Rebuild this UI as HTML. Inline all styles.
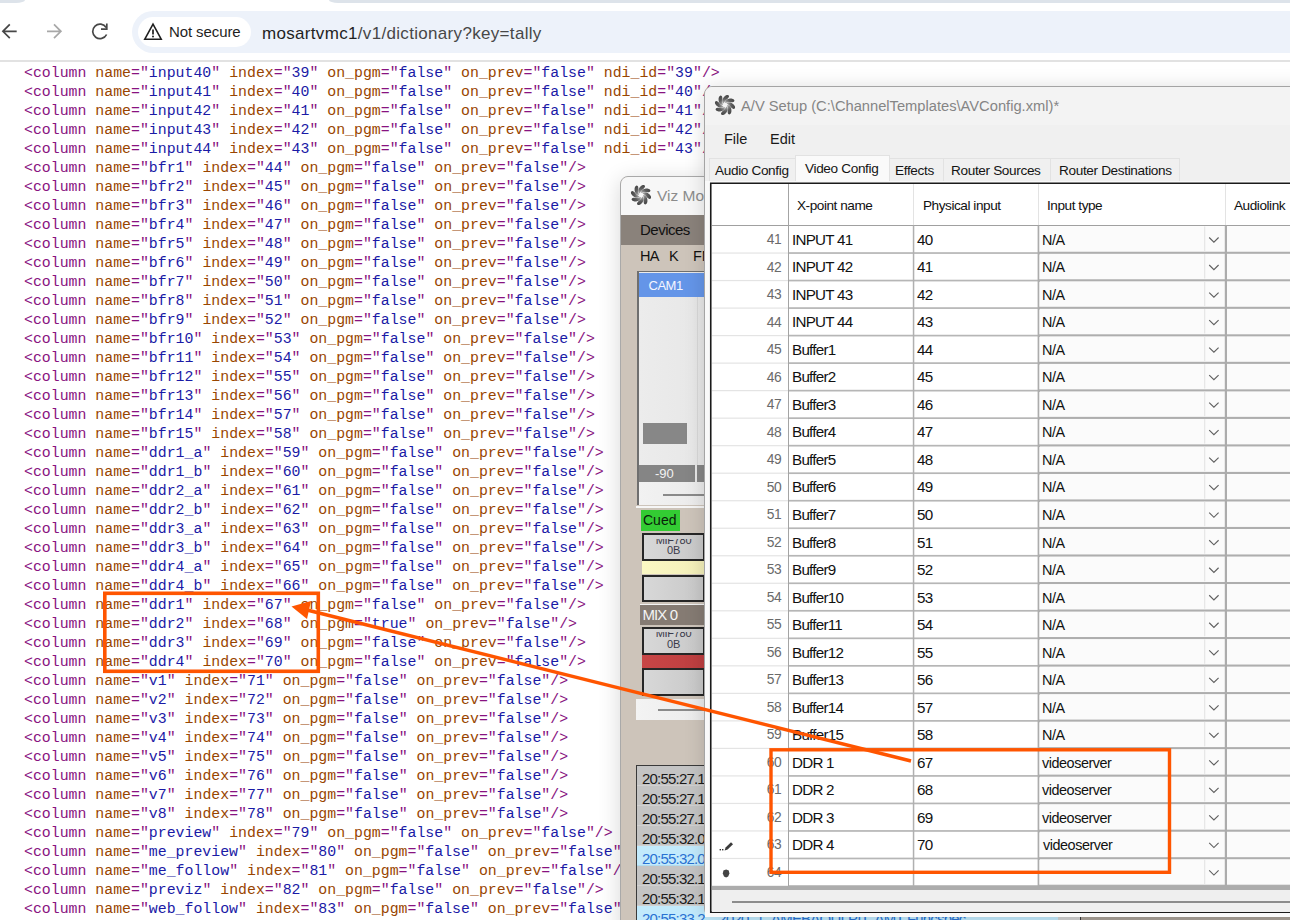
<!DOCTYPE html><html><head><meta charset="utf-8"><style>
*{margin:0;padding:0;box-sizing:border-box}
html,body{width:1290px;height:920px;overflow:hidden;background:#fff}
body{position:relative;font-family:"Liberation Sans",sans-serif}
.abs{position:absolute}
i{font-style:normal}
.xl{position:absolute;left:24px;height:19px;line-height:19px;white-space:pre;font-family:"Liberation Mono",monospace;font-size:14.86px}
.t{color:#881280}.a{color:#994500}.v{color:#1a1aa6}
</style></head><body>
<div class=abs style="left:0;top:0;width:25px;height:3px;background:#dde3ea;border-bottom-right-radius:9px 3px"></div>
<div class=abs style="left:329px;top:0;width:964px;height:3px;background:#dde3ea;border-bottom-left-radius:9px 3px"></div>
<div class=abs style="left:132px;top:11px;width:1200px;height:42px;background:#edf2fa;border-radius:21px"></div>
<div class=abs style="left:138px;top:17px;width:113px;height:30px;background:#fff;border-radius:15px"></div>
<div class=abs style="left:0;top:60px;width:1290px;height:2px;background:#e2e2e2"></div>
<svg class=abs style="left:0;top:16px" width="120" height="32" viewBox="0 16 120 32">
<g fill="none" stroke-width="1.7" stroke-linecap="butt">
<path d="M16.7 31.3H3.2M9.8 24.4L2.9 31.3L9.8 38.2" stroke="#474747"/>
<path d="M47 31.3H60.6M54 24.4L60.9 31.3L54 38.2" stroke="#a8a8a8"/>
<path d="M106.2 27.5A7.3 7.3 0 1 0 106.6 34.5" stroke="#474747"/>
<path d="M101 29.2H106.8V23.6" stroke="#474747"/>
</g></svg>
<svg class=abs style="left:143px;top:22px" width="20" height="20" viewBox="0 0 20 20">
<path d="M10 2.2L18.2 17.2H1.8Z" fill="none" stroke="#1f1f1f" stroke-width="1.6" stroke-linejoin="miter"/>
<path d="M10 7.4V12.4" stroke="#1f1f1f" stroke-width="1.7"/><circle cx="10" cy="14.4" r="1" fill="#1f1f1f"/>
</svg>
<div class=abs style="left:169px;top:20px;font-size:15px;line-height:24px;color:#1f1f1f;letter-spacing:-0.1px">Not secure</div>
<div class=abs style="left:262px;top:21px;font-size:17px;line-height:26px;color:#1f1f1f;letter-spacing:0.32px">mosartvmc1<span style="color:#474747">/v1/dictionary?key=tally</span></div>
<div class=xl style="top:64px"><i class=t>&lt;column</i> <i class=a>name</i><i class=t>="</i><i class=v>input40</i><i class=t>"</i> <i class=a>index</i><i class=t>="</i><i class=v>39</i><i class=t>"</i> <i class=a>on_pgm</i><i class=t>="</i><i class=v>false</i><i class=t>"</i> <i class=a>on_prev</i><i class=t>="</i><i class=v>false</i><i class=t>"</i> <i class=a>ndi_id</i><i class=t>="</i><i class=v>39</i><i class=t>"</i><i class=t>/&gt;</i></div>
<div class=xl style="top:83px"><i class=t>&lt;column</i> <i class=a>name</i><i class=t>="</i><i class=v>input41</i><i class=t>"</i> <i class=a>index</i><i class=t>="</i><i class=v>40</i><i class=t>"</i> <i class=a>on_pgm</i><i class=t>="</i><i class=v>false</i><i class=t>"</i> <i class=a>on_prev</i><i class=t>="</i><i class=v>false</i><i class=t>"</i> <i class=a>ndi_id</i><i class=t>="</i><i class=v>40</i><i class=t>"</i><i class=t>/&gt;</i></div>
<div class=xl style="top:102px"><i class=t>&lt;column</i> <i class=a>name</i><i class=t>="</i><i class=v>input42</i><i class=t>"</i> <i class=a>index</i><i class=t>="</i><i class=v>41</i><i class=t>"</i> <i class=a>on_pgm</i><i class=t>="</i><i class=v>false</i><i class=t>"</i> <i class=a>on_prev</i><i class=t>="</i><i class=v>false</i><i class=t>"</i> <i class=a>ndi_id</i><i class=t>="</i><i class=v>41</i><i class=t>"</i><i class=t>/&gt;</i></div>
<div class=xl style="top:121px"><i class=t>&lt;column</i> <i class=a>name</i><i class=t>="</i><i class=v>input43</i><i class=t>"</i> <i class=a>index</i><i class=t>="</i><i class=v>42</i><i class=t>"</i> <i class=a>on_pgm</i><i class=t>="</i><i class=v>false</i><i class=t>"</i> <i class=a>on_prev</i><i class=t>="</i><i class=v>false</i><i class=t>"</i> <i class=a>ndi_id</i><i class=t>="</i><i class=v>42</i><i class=t>"</i><i class=t>/&gt;</i></div>
<div class=xl style="top:140px"><i class=t>&lt;column</i> <i class=a>name</i><i class=t>="</i><i class=v>input44</i><i class=t>"</i> <i class=a>index</i><i class=t>="</i><i class=v>43</i><i class=t>"</i> <i class=a>on_pgm</i><i class=t>="</i><i class=v>false</i><i class=t>"</i> <i class=a>on_prev</i><i class=t>="</i><i class=v>false</i><i class=t>"</i> <i class=a>ndi_id</i><i class=t>="</i><i class=v>43</i><i class=t>"</i><i class=t>/&gt;</i></div>
<div class=xl style="top:159px"><i class=t>&lt;column</i> <i class=a>name</i><i class=t>="</i><i class=v>bfr1</i><i class=t>"</i> <i class=a>index</i><i class=t>="</i><i class=v>44</i><i class=t>"</i> <i class=a>on_pgm</i><i class=t>="</i><i class=v>false</i><i class=t>"</i> <i class=a>on_prev</i><i class=t>="</i><i class=v>false</i><i class=t>"</i><i class=t>/&gt;</i></div>
<div class=xl style="top:178px"><i class=t>&lt;column</i> <i class=a>name</i><i class=t>="</i><i class=v>bfr2</i><i class=t>"</i> <i class=a>index</i><i class=t>="</i><i class=v>45</i><i class=t>"</i> <i class=a>on_pgm</i><i class=t>="</i><i class=v>false</i><i class=t>"</i> <i class=a>on_prev</i><i class=t>="</i><i class=v>false</i><i class=t>"</i><i class=t>/&gt;</i></div>
<div class=xl style="top:197px"><i class=t>&lt;column</i> <i class=a>name</i><i class=t>="</i><i class=v>bfr3</i><i class=t>"</i> <i class=a>index</i><i class=t>="</i><i class=v>46</i><i class=t>"</i> <i class=a>on_pgm</i><i class=t>="</i><i class=v>false</i><i class=t>"</i> <i class=a>on_prev</i><i class=t>="</i><i class=v>false</i><i class=t>"</i><i class=t>/&gt;</i></div>
<div class=xl style="top:216px"><i class=t>&lt;column</i> <i class=a>name</i><i class=t>="</i><i class=v>bfr4</i><i class=t>"</i> <i class=a>index</i><i class=t>="</i><i class=v>47</i><i class=t>"</i> <i class=a>on_pgm</i><i class=t>="</i><i class=v>false</i><i class=t>"</i> <i class=a>on_prev</i><i class=t>="</i><i class=v>false</i><i class=t>"</i><i class=t>/&gt;</i></div>
<div class=xl style="top:235px"><i class=t>&lt;column</i> <i class=a>name</i><i class=t>="</i><i class=v>bfr5</i><i class=t>"</i> <i class=a>index</i><i class=t>="</i><i class=v>48</i><i class=t>"</i> <i class=a>on_pgm</i><i class=t>="</i><i class=v>false</i><i class=t>"</i> <i class=a>on_prev</i><i class=t>="</i><i class=v>false</i><i class=t>"</i><i class=t>/&gt;</i></div>
<div class=xl style="top:254px"><i class=t>&lt;column</i> <i class=a>name</i><i class=t>="</i><i class=v>bfr6</i><i class=t>"</i> <i class=a>index</i><i class=t>="</i><i class=v>49</i><i class=t>"</i> <i class=a>on_pgm</i><i class=t>="</i><i class=v>false</i><i class=t>"</i> <i class=a>on_prev</i><i class=t>="</i><i class=v>false</i><i class=t>"</i><i class=t>/&gt;</i></div>
<div class=xl style="top:273px"><i class=t>&lt;column</i> <i class=a>name</i><i class=t>="</i><i class=v>bfr7</i><i class=t>"</i> <i class=a>index</i><i class=t>="</i><i class=v>50</i><i class=t>"</i> <i class=a>on_pgm</i><i class=t>="</i><i class=v>false</i><i class=t>"</i> <i class=a>on_prev</i><i class=t>="</i><i class=v>false</i><i class=t>"</i><i class=t>/&gt;</i></div>
<div class=xl style="top:292px"><i class=t>&lt;column</i> <i class=a>name</i><i class=t>="</i><i class=v>bfr8</i><i class=t>"</i> <i class=a>index</i><i class=t>="</i><i class=v>51</i><i class=t>"</i> <i class=a>on_pgm</i><i class=t>="</i><i class=v>false</i><i class=t>"</i> <i class=a>on_prev</i><i class=t>="</i><i class=v>false</i><i class=t>"</i><i class=t>/&gt;</i></div>
<div class=xl style="top:311px"><i class=t>&lt;column</i> <i class=a>name</i><i class=t>="</i><i class=v>bfr9</i><i class=t>"</i> <i class=a>index</i><i class=t>="</i><i class=v>52</i><i class=t>"</i> <i class=a>on_pgm</i><i class=t>="</i><i class=v>false</i><i class=t>"</i> <i class=a>on_prev</i><i class=t>="</i><i class=v>false</i><i class=t>"</i><i class=t>/&gt;</i></div>
<div class=xl style="top:330px"><i class=t>&lt;column</i> <i class=a>name</i><i class=t>="</i><i class=v>bfr10</i><i class=t>"</i> <i class=a>index</i><i class=t>="</i><i class=v>53</i><i class=t>"</i> <i class=a>on_pgm</i><i class=t>="</i><i class=v>false</i><i class=t>"</i> <i class=a>on_prev</i><i class=t>="</i><i class=v>false</i><i class=t>"</i><i class=t>/&gt;</i></div>
<div class=xl style="top:349px"><i class=t>&lt;column</i> <i class=a>name</i><i class=t>="</i><i class=v>bfr11</i><i class=t>"</i> <i class=a>index</i><i class=t>="</i><i class=v>54</i><i class=t>"</i> <i class=a>on_pgm</i><i class=t>="</i><i class=v>false</i><i class=t>"</i> <i class=a>on_prev</i><i class=t>="</i><i class=v>false</i><i class=t>"</i><i class=t>/&gt;</i></div>
<div class=xl style="top:368px"><i class=t>&lt;column</i> <i class=a>name</i><i class=t>="</i><i class=v>bfr12</i><i class=t>"</i> <i class=a>index</i><i class=t>="</i><i class=v>55</i><i class=t>"</i> <i class=a>on_pgm</i><i class=t>="</i><i class=v>false</i><i class=t>"</i> <i class=a>on_prev</i><i class=t>="</i><i class=v>false</i><i class=t>"</i><i class=t>/&gt;</i></div>
<div class=xl style="top:387px"><i class=t>&lt;column</i> <i class=a>name</i><i class=t>="</i><i class=v>bfr13</i><i class=t>"</i> <i class=a>index</i><i class=t>="</i><i class=v>56</i><i class=t>"</i> <i class=a>on_pgm</i><i class=t>="</i><i class=v>false</i><i class=t>"</i> <i class=a>on_prev</i><i class=t>="</i><i class=v>false</i><i class=t>"</i><i class=t>/&gt;</i></div>
<div class=xl style="top:406px"><i class=t>&lt;column</i> <i class=a>name</i><i class=t>="</i><i class=v>bfr14</i><i class=t>"</i> <i class=a>index</i><i class=t>="</i><i class=v>57</i><i class=t>"</i> <i class=a>on_pgm</i><i class=t>="</i><i class=v>false</i><i class=t>"</i> <i class=a>on_prev</i><i class=t>="</i><i class=v>false</i><i class=t>"</i><i class=t>/&gt;</i></div>
<div class=xl style="top:425px"><i class=t>&lt;column</i> <i class=a>name</i><i class=t>="</i><i class=v>bfr15</i><i class=t>"</i> <i class=a>index</i><i class=t>="</i><i class=v>58</i><i class=t>"</i> <i class=a>on_pgm</i><i class=t>="</i><i class=v>false</i><i class=t>"</i> <i class=a>on_prev</i><i class=t>="</i><i class=v>false</i><i class=t>"</i><i class=t>/&gt;</i></div>
<div class=xl style="top:444px"><i class=t>&lt;column</i> <i class=a>name</i><i class=t>="</i><i class=v>ddr1_a</i><i class=t>"</i> <i class=a>index</i><i class=t>="</i><i class=v>59</i><i class=t>"</i> <i class=a>on_pgm</i><i class=t>="</i><i class=v>false</i><i class=t>"</i> <i class=a>on_prev</i><i class=t>="</i><i class=v>false</i><i class=t>"</i><i class=t>/&gt;</i></div>
<div class=xl style="top:463px"><i class=t>&lt;column</i> <i class=a>name</i><i class=t>="</i><i class=v>ddr1_b</i><i class=t>"</i> <i class=a>index</i><i class=t>="</i><i class=v>60</i><i class=t>"</i> <i class=a>on_pgm</i><i class=t>="</i><i class=v>false</i><i class=t>"</i> <i class=a>on_prev</i><i class=t>="</i><i class=v>false</i><i class=t>"</i><i class=t>/&gt;</i></div>
<div class=xl style="top:482px"><i class=t>&lt;column</i> <i class=a>name</i><i class=t>="</i><i class=v>ddr2_a</i><i class=t>"</i> <i class=a>index</i><i class=t>="</i><i class=v>61</i><i class=t>"</i> <i class=a>on_pgm</i><i class=t>="</i><i class=v>false</i><i class=t>"</i> <i class=a>on_prev</i><i class=t>="</i><i class=v>false</i><i class=t>"</i><i class=t>/&gt;</i></div>
<div class=xl style="top:501px"><i class=t>&lt;column</i> <i class=a>name</i><i class=t>="</i><i class=v>ddr2_b</i><i class=t>"</i> <i class=a>index</i><i class=t>="</i><i class=v>62</i><i class=t>"</i> <i class=a>on_pgm</i><i class=t>="</i><i class=v>false</i><i class=t>"</i> <i class=a>on_prev</i><i class=t>="</i><i class=v>false</i><i class=t>"</i><i class=t>/&gt;</i></div>
<div class=xl style="top:520px"><i class=t>&lt;column</i> <i class=a>name</i><i class=t>="</i><i class=v>ddr3_a</i><i class=t>"</i> <i class=a>index</i><i class=t>="</i><i class=v>63</i><i class=t>"</i> <i class=a>on_pgm</i><i class=t>="</i><i class=v>false</i><i class=t>"</i> <i class=a>on_prev</i><i class=t>="</i><i class=v>false</i><i class=t>"</i><i class=t>/&gt;</i></div>
<div class=xl style="top:539px"><i class=t>&lt;column</i> <i class=a>name</i><i class=t>="</i><i class=v>ddr3_b</i><i class=t>"</i> <i class=a>index</i><i class=t>="</i><i class=v>64</i><i class=t>"</i> <i class=a>on_pgm</i><i class=t>="</i><i class=v>false</i><i class=t>"</i> <i class=a>on_prev</i><i class=t>="</i><i class=v>false</i><i class=t>"</i><i class=t>/&gt;</i></div>
<div class=xl style="top:558px"><i class=t>&lt;column</i> <i class=a>name</i><i class=t>="</i><i class=v>ddr4_a</i><i class=t>"</i> <i class=a>index</i><i class=t>="</i><i class=v>65</i><i class=t>"</i> <i class=a>on_pgm</i><i class=t>="</i><i class=v>false</i><i class=t>"</i> <i class=a>on_prev</i><i class=t>="</i><i class=v>false</i><i class=t>"</i><i class=t>/&gt;</i></div>
<div class=xl style="top:577px"><i class=t>&lt;column</i> <i class=a>name</i><i class=t>="</i><i class=v>ddr4_b</i><i class=t>"</i> <i class=a>index</i><i class=t>="</i><i class=v>66</i><i class=t>"</i> <i class=a>on_pgm</i><i class=t>="</i><i class=v>false</i><i class=t>"</i> <i class=a>on_prev</i><i class=t>="</i><i class=v>false</i><i class=t>"</i><i class=t>/&gt;</i></div>
<div class=xl style="top:596px"><i class=t>&lt;column</i> <i class=a>name</i><i class=t>="</i><i class=v>ddr1</i><i class=t>"</i> <i class=a>index</i><i class=t>="</i><i class=v>67</i><i class=t>"</i> <i class=a>on_pgm</i><i class=t>="</i><i class=v>false</i><i class=t>"</i> <i class=a>on_prev</i><i class=t>="</i><i class=v>false</i><i class=t>"</i><i class=t>/&gt;</i></div>
<div class=xl style="top:615px"><i class=t>&lt;column</i> <i class=a>name</i><i class=t>="</i><i class=v>ddr2</i><i class=t>"</i> <i class=a>index</i><i class=t>="</i><i class=v>68</i><i class=t>"</i> <i class=a>on_pgm</i><i class=t>="</i><i class=v>true</i><i class=t>"</i> <i class=a>on_prev</i><i class=t>="</i><i class=v>false</i><i class=t>"</i><i class=t>/&gt;</i></div>
<div class=xl style="top:634px"><i class=t>&lt;column</i> <i class=a>name</i><i class=t>="</i><i class=v>ddr3</i><i class=t>"</i> <i class=a>index</i><i class=t>="</i><i class=v>69</i><i class=t>"</i> <i class=a>on_pgm</i><i class=t>="</i><i class=v>false</i><i class=t>"</i> <i class=a>on_prev</i><i class=t>="</i><i class=v>false</i><i class=t>"</i><i class=t>/&gt;</i></div>
<div class=xl style="top:653px"><i class=t>&lt;column</i> <i class=a>name</i><i class=t>="</i><i class=v>ddr4</i><i class=t>"</i> <i class=a>index</i><i class=t>="</i><i class=v>70</i><i class=t>"</i> <i class=a>on_pgm</i><i class=t>="</i><i class=v>false</i><i class=t>"</i> <i class=a>on_prev</i><i class=t>="</i><i class=v>false</i><i class=t>"</i><i class=t>/&gt;</i></div>
<div class=xl style="top:672px"><i class=t>&lt;column</i> <i class=a>name</i><i class=t>="</i><i class=v>v1</i><i class=t>"</i> <i class=a>index</i><i class=t>="</i><i class=v>71</i><i class=t>"</i> <i class=a>on_pgm</i><i class=t>="</i><i class=v>false</i><i class=t>"</i> <i class=a>on_prev</i><i class=t>="</i><i class=v>false</i><i class=t>"</i><i class=t>/&gt;</i></div>
<div class=xl style="top:691px"><i class=t>&lt;column</i> <i class=a>name</i><i class=t>="</i><i class=v>v2</i><i class=t>"</i> <i class=a>index</i><i class=t>="</i><i class=v>72</i><i class=t>"</i> <i class=a>on_pgm</i><i class=t>="</i><i class=v>false</i><i class=t>"</i> <i class=a>on_prev</i><i class=t>="</i><i class=v>false</i><i class=t>"</i><i class=t>/&gt;</i></div>
<div class=xl style="top:710px"><i class=t>&lt;column</i> <i class=a>name</i><i class=t>="</i><i class=v>v3</i><i class=t>"</i> <i class=a>index</i><i class=t>="</i><i class=v>73</i><i class=t>"</i> <i class=a>on_pgm</i><i class=t>="</i><i class=v>false</i><i class=t>"</i> <i class=a>on_prev</i><i class=t>="</i><i class=v>false</i><i class=t>"</i><i class=t>/&gt;</i></div>
<div class=xl style="top:729px"><i class=t>&lt;column</i> <i class=a>name</i><i class=t>="</i><i class=v>v4</i><i class=t>"</i> <i class=a>index</i><i class=t>="</i><i class=v>74</i><i class=t>"</i> <i class=a>on_pgm</i><i class=t>="</i><i class=v>false</i><i class=t>"</i> <i class=a>on_prev</i><i class=t>="</i><i class=v>false</i><i class=t>"</i><i class=t>/&gt;</i></div>
<div class=xl style="top:748px"><i class=t>&lt;column</i> <i class=a>name</i><i class=t>="</i><i class=v>v5</i><i class=t>"</i> <i class=a>index</i><i class=t>="</i><i class=v>75</i><i class=t>"</i> <i class=a>on_pgm</i><i class=t>="</i><i class=v>false</i><i class=t>"</i> <i class=a>on_prev</i><i class=t>="</i><i class=v>false</i><i class=t>"</i><i class=t>/&gt;</i></div>
<div class=xl style="top:767px"><i class=t>&lt;column</i> <i class=a>name</i><i class=t>="</i><i class=v>v6</i><i class=t>"</i> <i class=a>index</i><i class=t>="</i><i class=v>76</i><i class=t>"</i> <i class=a>on_pgm</i><i class=t>="</i><i class=v>false</i><i class=t>"</i> <i class=a>on_prev</i><i class=t>="</i><i class=v>false</i><i class=t>"</i><i class=t>/&gt;</i></div>
<div class=xl style="top:786px"><i class=t>&lt;column</i> <i class=a>name</i><i class=t>="</i><i class=v>v7</i><i class=t>"</i> <i class=a>index</i><i class=t>="</i><i class=v>77</i><i class=t>"</i> <i class=a>on_pgm</i><i class=t>="</i><i class=v>false</i><i class=t>"</i> <i class=a>on_prev</i><i class=t>="</i><i class=v>false</i><i class=t>"</i><i class=t>/&gt;</i></div>
<div class=xl style="top:805px"><i class=t>&lt;column</i> <i class=a>name</i><i class=t>="</i><i class=v>v8</i><i class=t>"</i> <i class=a>index</i><i class=t>="</i><i class=v>78</i><i class=t>"</i> <i class=a>on_pgm</i><i class=t>="</i><i class=v>false</i><i class=t>"</i> <i class=a>on_prev</i><i class=t>="</i><i class=v>false</i><i class=t>"</i><i class=t>/&gt;</i></div>
<div class=xl style="top:824px"><i class=t>&lt;column</i> <i class=a>name</i><i class=t>="</i><i class=v>preview</i><i class=t>"</i> <i class=a>index</i><i class=t>="</i><i class=v>79</i><i class=t>"</i> <i class=a>on_pgm</i><i class=t>="</i><i class=v>false</i><i class=t>"</i> <i class=a>on_prev</i><i class=t>="</i><i class=v>false</i><i class=t>"</i><i class=t>/&gt;</i></div>
<div class=xl style="top:843px"><i class=t>&lt;column</i> <i class=a>name</i><i class=t>="</i><i class=v>me_preview</i><i class=t>"</i> <i class=a>index</i><i class=t>="</i><i class=v>80</i><i class=t>"</i> <i class=a>on_pgm</i><i class=t>="</i><i class=v>false</i><i class=t>"</i> <i class=a>on_prev</i><i class=t>="</i><i class=v>false</i><i class=t>"</i><i class=t>/&gt;</i></div>
<div class=xl style="top:862px"><i class=t>&lt;column</i> <i class=a>name</i><i class=t>="</i><i class=v>me_follow</i><i class=t>"</i> <i class=a>index</i><i class=t>="</i><i class=v>81</i><i class=t>"</i> <i class=a>on_pgm</i><i class=t>="</i><i class=v>false</i><i class=t>"</i> <i class=a>on_prev</i><i class=t>="</i><i class=v>false</i><i class=t>"</i><i class=t>/&gt;</i></div>
<div class=xl style="top:881px"><i class=t>&lt;column</i> <i class=a>name</i><i class=t>="</i><i class=v>previz</i><i class=t>"</i> <i class=a>index</i><i class=t>="</i><i class=v>82</i><i class=t>"</i> <i class=a>on_pgm</i><i class=t>="</i><i class=v>false</i><i class=t>"</i> <i class=a>on_prev</i><i class=t>="</i><i class=v>false</i><i class=t>"</i><i class=t>/&gt;</i></div>
<div class=xl style="top:900px"><i class=t>&lt;column</i> <i class=a>name</i><i class=t>="</i><i class=v>web_follow</i><i class=t>"</i> <i class=a>index</i><i class=t>="</i><i class=v>83</i><i class=t>"</i> <i class=a>on_pgm</i><i class=t>="</i><i class=v>false</i><i class=t>"</i> <i class=a>on_prev</i><i class=t>="</i><i class=v>false</i><i class=t>"</i><i class=t>/&gt;</i></div>
<div class=abs style="left:620px;top:176px;width:700px;height:760px;background:#cdc4ba;border:1px solid #a9a9a9;border-radius:8px 0 0 0;box-shadow:0 4px 22px rgba(0,0,0,0.16);overflow:hidden">
<div class=abs style="left:0;top:0;width:700px;height:38px;background:#f7f7f7"></div>
<div class=abs style="left:0;top:38px;width:700px;height:30px;background:#8a827b"></div>
<div class=abs style="left:19px;top:44px;font-size:15px;line-height:18px;color:#111;letter-spacing:-0.5px">Devices</div>
<div class=abs style="left:19px;top:70px;font-size:14.5px;line-height:18px;color:#111;letter-spacing:-0.6px">HA</div>
<div class=abs style="left:48px;top:70px;font-size:14.5px;line-height:18px;color:#111">K</div>
<div class=abs style="left:72px;top:70px;font-size:14.5px;line-height:18px;color:#111">FM</div>
<div class=abs style="left:36px;top:10px;font-size:15.5px;line-height:18px;color:#8c8c8c">Viz Mosart</div>
<svg class=abs style="left:9px;top:7px" width="22" height="22" viewBox="-11 -11 22 22"><defs><radialGradient id="pwg2" cx="0" cy="0" r="10.5" gradientUnits="userSpaceOnUse"><stop offset="0.2" stop-color="#b0b0b0"/><stop offset="0.6" stop-color="#5e5e5e"/><stop offset="1" stop-color="#444"/></radialGradient></defs><path d="M-1.24,-1.55 L-0.93,-2.17 L-0.67,-2.68 L-0.39,-3.14 L-0.10,-3.55 L0.22,-3.95 L0.56,-4.33 L0.92,-4.71 L1.29,-5.08 L1.69,-5.46 L2.11,-5.84 L2.53,-6.25 L2.96,-6.70 L3.37,-7.22 L3.74,-7.83 L4.01,-8.58 L3.60,-9.75 L3.51,-9.80 L2.44,-10.08 L1.83,-10.02 L1.24,-9.82 L0.63,-9.50 L0.04,-9.09 L-0.53,-8.57 L-1.07,-7.98 L-1.56,-7.32 L-1.97,-6.60 L-2.29,-5.82 L-2.49,-5.02 L-2.57,-4.20 L-2.51,-3.40 L-2.30,-2.65 L-1.93,-2.00 L-1.33,-1.52Z" fill="url(#pwg2)"/><path d="M0.22,-1.97 L0.87,-2.19 L1.42,-2.37 L1.94,-2.50 L2.45,-2.58 L2.95,-2.64 L3.46,-2.67 L3.98,-2.68 L4.51,-2.68 L5.05,-2.66 L5.62,-2.64 L6.21,-2.63 L6.83,-2.65 L7.49,-2.72 L8.18,-2.89 L8.90,-3.24 L9.44,-4.35 L9.41,-4.44 L8.86,-5.40 L8.39,-5.79 L7.82,-6.07 L7.17,-6.27 L6.45,-6.40 L5.68,-6.44 L4.88,-6.40 L4.07,-6.28 L3.27,-6.06 L2.50,-5.73 L1.79,-5.31 L1.15,-4.79 L0.63,-4.18 L0.25,-3.50 L0.05,-2.77 L0.13,-2.01Z" fill="url(#pwg2)"/><path d="M1.55,-1.24 L2.17,-0.93 L2.68,-0.67 L3.14,-0.39 L3.55,-0.10 L3.95,0.22 L4.33,0.56 L4.71,0.92 L5.08,1.29 L5.46,1.69 L5.84,2.11 L6.25,2.53 L6.70,2.96 L7.22,3.37 L7.83,3.74 L8.58,4.01 L9.75,3.60 L9.80,3.51 L10.08,2.44 L10.02,1.83 L9.82,1.24 L9.50,0.63 L9.09,0.04 L8.57,-0.53 L7.98,-1.07 L7.32,-1.56 L6.60,-1.97 L5.82,-2.29 L5.02,-2.49 L4.20,-2.57 L3.40,-2.51 L2.65,-2.30 L2.00,-1.93 L1.52,-1.33Z" fill="url(#pwg2)"/><path d="M1.97,0.22 L2.19,0.87 L2.37,1.42 L2.50,1.94 L2.58,2.45 L2.64,2.95 L2.67,3.46 L2.68,3.98 L2.68,4.51 L2.66,5.05 L2.64,5.62 L2.63,6.21 L2.65,6.83 L2.72,7.49 L2.89,8.18 L3.24,8.90 L4.35,9.44 L4.44,9.41 L5.40,8.86 L5.79,8.39 L6.07,7.82 L6.27,7.17 L6.40,6.45 L6.44,5.68 L6.40,4.88 L6.28,4.07 L6.06,3.27 L5.73,2.50 L5.31,1.79 L4.79,1.15 L4.18,0.63 L3.50,0.25 L2.77,0.05 L2.01,0.13Z" fill="url(#pwg2)"/><path d="M1.24,1.55 L0.93,2.17 L0.67,2.68 L0.39,3.14 L0.10,3.55 L-0.22,3.95 L-0.56,4.33 L-0.92,4.71 L-1.29,5.08 L-1.69,5.46 L-2.11,5.84 L-2.53,6.25 L-2.96,6.70 L-3.37,7.22 L-3.74,7.83 L-4.01,8.58 L-3.60,9.75 L-3.51,9.80 L-2.44,10.08 L-1.83,10.02 L-1.24,9.82 L-0.63,9.50 L-0.04,9.09 L0.53,8.57 L1.07,7.98 L1.56,7.32 L1.97,6.60 L2.29,5.82 L2.49,5.02 L2.57,4.20 L2.51,3.40 L2.30,2.65 L1.93,2.00 L1.33,1.52Z" fill="url(#pwg2)"/><path d="M-0.22,1.97 L-0.87,2.19 L-1.42,2.37 L-1.94,2.50 L-2.45,2.58 L-2.95,2.64 L-3.46,2.67 L-3.98,2.68 L-4.51,2.68 L-5.05,2.66 L-5.62,2.64 L-6.21,2.63 L-6.83,2.65 L-7.49,2.72 L-8.18,2.89 L-8.90,3.24 L-9.44,4.35 L-9.41,4.44 L-8.86,5.40 L-8.39,5.79 L-7.82,6.07 L-7.17,6.27 L-6.45,6.40 L-5.68,6.44 L-4.88,6.40 L-4.07,6.28 L-3.27,6.06 L-2.50,5.73 L-1.79,5.31 L-1.15,4.79 L-0.63,4.18 L-0.25,3.50 L-0.05,2.77 L-0.13,2.01Z" fill="url(#pwg2)"/><path d="M-1.55,1.24 L-2.17,0.93 L-2.68,0.67 L-3.14,0.39 L-3.55,0.10 L-3.95,-0.22 L-4.33,-0.56 L-4.71,-0.92 L-5.08,-1.29 L-5.46,-1.69 L-5.84,-2.11 L-6.25,-2.53 L-6.70,-2.96 L-7.22,-3.37 L-7.83,-3.74 L-8.58,-4.01 L-9.75,-3.60 L-9.80,-3.51 L-10.08,-2.44 L-10.02,-1.83 L-9.82,-1.24 L-9.50,-0.63 L-9.09,-0.04 L-8.57,0.53 L-7.98,1.07 L-7.32,1.56 L-6.60,1.97 L-5.82,2.29 L-5.02,2.49 L-4.20,2.57 L-3.40,2.51 L-2.65,2.30 L-2.00,1.93 L-1.52,1.33Z" fill="url(#pwg2)"/><path d="M-1.97,-0.22 L-2.19,-0.87 L-2.37,-1.42 L-2.50,-1.94 L-2.58,-2.45 L-2.64,-2.95 L-2.67,-3.46 L-2.68,-3.98 L-2.68,-4.51 L-2.66,-5.05 L-2.64,-5.62 L-2.63,-6.21 L-2.65,-6.83 L-2.72,-7.49 L-2.89,-8.18 L-3.24,-8.90 L-4.35,-9.44 L-4.44,-9.41 L-5.40,-8.86 L-5.79,-8.39 L-6.07,-7.82 L-6.27,-7.17 L-6.40,-6.45 L-6.44,-5.68 L-6.40,-4.88 L-6.28,-4.07 L-6.06,-3.27 L-5.73,-2.50 L-5.31,-1.79 L-4.79,-1.15 L-4.18,-0.63 L-3.50,-0.25 L-2.77,-0.05 L-2.01,-0.13Z" fill="url(#pwg2)"/></svg>
</div>
<div class=abs style="left:637px;top:271px;width:80px;height:234px;background:linear-gradient(90deg,#ececec,#e6e6e6);border-left:2px solid #6f6f6f;border-top:1.5px solid #6f6f6f"></div>
<div class=abs style="left:639px;top:272.5px;width:80px;height:24.7px;background:#6495e8"></div>
<div class=abs style="left:648.5px;top:276.5px;font-size:13px;line-height:17px;color:#f4f6ff;letter-spacing:-0.5px">CAM1</div>
<div class=abs style="left:697px;top:297px;width:1px;height:168px;background:#d8d8d8"></div>
<div class=abs style="left:643px;top:423px;width:44px;height:21px;background:#878787"></div>
<div class=abs style="left:639px;top:465px;width:56px;height:17px;background:#858585"></div>
<div class=abs style="left:697px;top:465px;width:20px;height:17px;background:#858585"></div>
<div class=abs style="left:655px;top:465px;font-size:13px;line-height:17px;color:#f2f2f2">-90</div>
<div class=abs style="left:639px;top:482px;width:80px;height:23px;background:linear-gradient(90deg,#f2f2f2,#e9e9e9)"></div>
<div class=abs style="left:663px;top:494px;width:50px;height:2px;background:#8a8a8a"></div>
<div class=abs style="left:636px;top:506px;width:70px;height:2px;background:#f6f6f6"></div>
<div class=abs style="left:641px;top:510px;width:39px;height:21px;background:#33cc33"></div>
<div class=abs style="left:643px;top:512px;font-size:14px;line-height:17px;color:#0a200a">Cued</div>
<div class=abs style="left:642px;top:533px;width:63px;height:28px;background:linear-gradient(90deg,#d8d8d8,#c8c8c8);border:2px solid #262626"></div>
<div class=abs style="left:644px;top:538.5px;width:59px;height:18px;overflow:hidden"><div class=abs style="left:0;top:-4px;width:59px;font-size:11px;line-height:10.5px;color:#3a3a4a;white-space:pre;text-align:center;letter-spacing:-0.3px">MIF780
0B</div></div>
<div class=abs style="left:642px;top:561px;width:63px;height:13px;background:linear-gradient(90deg,#fbf8c4,#f2eeb8)"></div>
<div class=abs style="left:642px;top:574.5px;width:63px;height:27.5px;background:linear-gradient(90deg,#d8d8d8,#c8c8c8);border:2px solid #262626"></div>
<div class=abs style="left:640px;top:604px;width:70px;height:1px;background:#f4f4f4"></div>
<div class=abs style="left:640px;top:605px;width:70px;height:19.5px;background:#857b73"></div>
<div class=abs style="left:642.5px;top:606px;font-size:15px;line-height:17px;color:#f4f4f4;letter-spacing:-0.9px">MIX 0</div>
<div class=abs style="left:642px;top:626.5px;width:63px;height:28px;background:linear-gradient(90deg,#d8d8d8,#c8c8c8);border:2px solid #262626"></div>
<div class=abs style="left:644px;top:632px;width:59px;height:18px;overflow:hidden"><div class=abs style="left:0;top:-4px;width:59px;font-size:11px;line-height:10.5px;color:#3a3a4a;white-space:pre;text-align:center;letter-spacing:-0.3px">MIF780
0B</div></div>
<div class=abs style="left:642px;top:654.5px;width:63px;height:13.5px;background:linear-gradient(90deg,#c84646,#bd3e40)"></div>
<div class=abs style="left:642px;top:668px;width:63px;height:28px;background:linear-gradient(90deg,#d8d8d8,#c8c8c8);border:2px solid #262626"></div>
<div class=abs style="left:636px;top:699px;width:80px;height:21px;background:linear-gradient(90deg,#f3f3f3,#eaeaea)"></div>
<div class=abs style="left:658px;top:709px;width:55px;height:2px;background:#8a8a8a"></div>
<div class=abs style="left:1080px;top:900px;width:300px;height:40px;background:#a8a097"></div>
<div class=abs style="left:636px;top:765px;width:445px;height:170px;background:#c4c4c4;border:1px solid #3a3a3a;overflow:hidden">
<div class=abs style="left:0;top:0.0px;width:700px;height:20px;background:#c4c4c4;border-bottom:1px solid #d0d0d0"></div>
<div class=abs style="left:5px;top:2.5px;font-size:15px;line-height:20px;color:#1a1a1a;letter-spacing:-0.8px;white-space:pre">20:55:27.1    2020   |   AMEBAQULPIT  AMT Funcspec</div>
<div class=abs style="left:0;top:20.1px;width:700px;height:20px;background:#c4c4c4;border-bottom:1px solid #d0d0d0"></div>
<div class=abs style="left:5px;top:22.6px;font-size:15px;line-height:20px;color:#1a1a1a;letter-spacing:-0.8px;white-space:pre">20:55:27.1    2020   |   AMEBAQULPIT  AMT Funcspec</div>
<div class=abs style="left:0;top:40.1px;width:700px;height:20px;background:#c4c4c4;border-bottom:1px solid #d0d0d0"></div>
<div class=abs style="left:5px;top:42.6px;font-size:15px;line-height:20px;color:#1a1a1a;letter-spacing:-0.8px;white-space:pre">20:55:27.1    2020   |   AMEBAQULPIT  AMT Funcspec</div>
<div class=abs style="left:0;top:60.2px;width:700px;height:20px;background:#c4c4c4;border-bottom:1px solid #d0d0d0"></div>
<div class=abs style="left:5px;top:62.7px;font-size:15px;line-height:20px;color:#1a1a1a;letter-spacing:-0.8px;white-space:pre">20:55:32.0    2020   |   AMEBAQULPIT  AMT Funcspec</div>
<div class=abs style="left:0;top:80.2px;width:700px;height:20px;background:#c2eafc;border-bottom:1px solid #b0dbee"></div>
<div class=abs style="left:5px;top:82.7px;font-size:15px;line-height:20px;color:#2a72d2;letter-spacing:-0.8px;white-space:pre">20:55:32.0    2020   |   AMEBAQULPIT  AMT Funcspec</div>
<div class=abs style="left:0;top:100.3px;width:700px;height:20px;background:#c4c4c4;border-bottom:1px solid #d0d0d0"></div>
<div class=abs style="left:5px;top:102.8px;font-size:15px;line-height:20px;color:#1a1a1a;letter-spacing:-0.8px;white-space:pre">20:55:32.1    2020   |   AMEBAQULPIT  AMT Funcspec</div>
<div class=abs style="left:0;top:120.4px;width:700px;height:20px;background:#c4c4c4;border-bottom:1px solid #d0d0d0"></div>
<div class=abs style="left:5px;top:122.9px;font-size:15px;line-height:20px;color:#1a1a1a;letter-spacing:-0.8px;white-space:pre">20:55:32.1    2020   |   AMEBAQULPIT  AMT Funcspec</div>
<div class=abs style="left:0;top:140.4px;width:700px;height:20px;background:#c2eafc;border-bottom:1px solid #b0dbee"></div>
<div class=abs style="left:5px;top:142.9px;font-size:15px;line-height:20px;color:#2a72d2;letter-spacing:-0.8px;white-space:pre">20:55:33.2    2020   |   AMEBAQULPIT  AMT Funcspec</div>
<div class=abs style="left:421px;top:0;width:22px;height:170px;background:#d2d2d2"></div>
</div>
<div class=abs style="left:704px;top:86px;width:700px;height:831px;background:#f0f0f0;border:1px solid #a4a4a4;border-radius:8px 0 0 8px;box-shadow:0 2px 20px rgba(0,0,0,0.15);overflow:hidden"></div>
<div class=abs style="left:705px;top:87px;width:600px;height:38px;background:#f3f3f3;border-radius:7px 0 0 0"></div>
<svg class=abs style="left:714px;top:94px" width="22" height="22" viewBox="-11 -11 22 22"><defs><radialGradient id="pwg" cx="0" cy="0" r="10.5" gradientUnits="userSpaceOnUse"><stop offset="0.2" stop-color="#b0b0b0"/><stop offset="0.6" stop-color="#5e5e5e"/><stop offset="1" stop-color="#444"/></radialGradient></defs><path d="M-1.24,-1.55 L-0.93,-2.17 L-0.67,-2.68 L-0.39,-3.14 L-0.10,-3.55 L0.22,-3.95 L0.56,-4.33 L0.92,-4.71 L1.29,-5.08 L1.69,-5.46 L2.11,-5.84 L2.53,-6.25 L2.96,-6.70 L3.37,-7.22 L3.74,-7.83 L4.01,-8.58 L3.60,-9.75 L3.51,-9.80 L2.44,-10.08 L1.83,-10.02 L1.24,-9.82 L0.63,-9.50 L0.04,-9.09 L-0.53,-8.57 L-1.07,-7.98 L-1.56,-7.32 L-1.97,-6.60 L-2.29,-5.82 L-2.49,-5.02 L-2.57,-4.20 L-2.51,-3.40 L-2.30,-2.65 L-1.93,-2.00 L-1.33,-1.52Z" fill="url(#pwg)"/><path d="M0.22,-1.97 L0.87,-2.19 L1.42,-2.37 L1.94,-2.50 L2.45,-2.58 L2.95,-2.64 L3.46,-2.67 L3.98,-2.68 L4.51,-2.68 L5.05,-2.66 L5.62,-2.64 L6.21,-2.63 L6.83,-2.65 L7.49,-2.72 L8.18,-2.89 L8.90,-3.24 L9.44,-4.35 L9.41,-4.44 L8.86,-5.40 L8.39,-5.79 L7.82,-6.07 L7.17,-6.27 L6.45,-6.40 L5.68,-6.44 L4.88,-6.40 L4.07,-6.28 L3.27,-6.06 L2.50,-5.73 L1.79,-5.31 L1.15,-4.79 L0.63,-4.18 L0.25,-3.50 L0.05,-2.77 L0.13,-2.01Z" fill="url(#pwg)"/><path d="M1.55,-1.24 L2.17,-0.93 L2.68,-0.67 L3.14,-0.39 L3.55,-0.10 L3.95,0.22 L4.33,0.56 L4.71,0.92 L5.08,1.29 L5.46,1.69 L5.84,2.11 L6.25,2.53 L6.70,2.96 L7.22,3.37 L7.83,3.74 L8.58,4.01 L9.75,3.60 L9.80,3.51 L10.08,2.44 L10.02,1.83 L9.82,1.24 L9.50,0.63 L9.09,0.04 L8.57,-0.53 L7.98,-1.07 L7.32,-1.56 L6.60,-1.97 L5.82,-2.29 L5.02,-2.49 L4.20,-2.57 L3.40,-2.51 L2.65,-2.30 L2.00,-1.93 L1.52,-1.33Z" fill="url(#pwg)"/><path d="M1.97,0.22 L2.19,0.87 L2.37,1.42 L2.50,1.94 L2.58,2.45 L2.64,2.95 L2.67,3.46 L2.68,3.98 L2.68,4.51 L2.66,5.05 L2.64,5.62 L2.63,6.21 L2.65,6.83 L2.72,7.49 L2.89,8.18 L3.24,8.90 L4.35,9.44 L4.44,9.41 L5.40,8.86 L5.79,8.39 L6.07,7.82 L6.27,7.17 L6.40,6.45 L6.44,5.68 L6.40,4.88 L6.28,4.07 L6.06,3.27 L5.73,2.50 L5.31,1.79 L4.79,1.15 L4.18,0.63 L3.50,0.25 L2.77,0.05 L2.01,0.13Z" fill="url(#pwg)"/><path d="M1.24,1.55 L0.93,2.17 L0.67,2.68 L0.39,3.14 L0.10,3.55 L-0.22,3.95 L-0.56,4.33 L-0.92,4.71 L-1.29,5.08 L-1.69,5.46 L-2.11,5.84 L-2.53,6.25 L-2.96,6.70 L-3.37,7.22 L-3.74,7.83 L-4.01,8.58 L-3.60,9.75 L-3.51,9.80 L-2.44,10.08 L-1.83,10.02 L-1.24,9.82 L-0.63,9.50 L-0.04,9.09 L0.53,8.57 L1.07,7.98 L1.56,7.32 L1.97,6.60 L2.29,5.82 L2.49,5.02 L2.57,4.20 L2.51,3.40 L2.30,2.65 L1.93,2.00 L1.33,1.52Z" fill="url(#pwg)"/><path d="M-0.22,1.97 L-0.87,2.19 L-1.42,2.37 L-1.94,2.50 L-2.45,2.58 L-2.95,2.64 L-3.46,2.67 L-3.98,2.68 L-4.51,2.68 L-5.05,2.66 L-5.62,2.64 L-6.21,2.63 L-6.83,2.65 L-7.49,2.72 L-8.18,2.89 L-8.90,3.24 L-9.44,4.35 L-9.41,4.44 L-8.86,5.40 L-8.39,5.79 L-7.82,6.07 L-7.17,6.27 L-6.45,6.40 L-5.68,6.44 L-4.88,6.40 L-4.07,6.28 L-3.27,6.06 L-2.50,5.73 L-1.79,5.31 L-1.15,4.79 L-0.63,4.18 L-0.25,3.50 L-0.05,2.77 L-0.13,2.01Z" fill="url(#pwg)"/><path d="M-1.55,1.24 L-2.17,0.93 L-2.68,0.67 L-3.14,0.39 L-3.55,0.10 L-3.95,-0.22 L-4.33,-0.56 L-4.71,-0.92 L-5.08,-1.29 L-5.46,-1.69 L-5.84,-2.11 L-6.25,-2.53 L-6.70,-2.96 L-7.22,-3.37 L-7.83,-3.74 L-8.58,-4.01 L-9.75,-3.60 L-9.80,-3.51 L-10.08,-2.44 L-10.02,-1.83 L-9.82,-1.24 L-9.50,-0.63 L-9.09,-0.04 L-8.57,0.53 L-7.98,1.07 L-7.32,1.56 L-6.60,1.97 L-5.82,2.29 L-5.02,2.49 L-4.20,2.57 L-3.40,2.51 L-2.65,2.30 L-2.00,1.93 L-1.52,1.33Z" fill="url(#pwg)"/><path d="M-1.97,-0.22 L-2.19,-0.87 L-2.37,-1.42 L-2.50,-1.94 L-2.58,-2.45 L-2.64,-2.95 L-2.67,-3.46 L-2.68,-3.98 L-2.68,-4.51 L-2.66,-5.05 L-2.64,-5.62 L-2.63,-6.21 L-2.65,-6.83 L-2.72,-7.49 L-2.89,-8.18 L-3.24,-8.90 L-4.35,-9.44 L-4.44,-9.41 L-5.40,-8.86 L-5.79,-8.39 L-6.07,-7.82 L-6.27,-7.17 L-6.40,-6.45 L-6.44,-5.68 L-6.40,-4.88 L-6.28,-4.07 L-6.06,-3.27 L-5.73,-2.50 L-5.31,-1.79 L-4.79,-1.15 L-4.18,-0.63 L-3.50,-0.25 L-2.77,-0.05 L-2.01,-0.13Z" fill="url(#pwg)"/></svg>
<div class=abs style="left:741px;top:95.8px;font-size:14.7px;line-height:20px;color:#858585;white-space:pre">A/V Setup (C:\ChannelTemplates\AVConfig.xml)*</div>
<div class=abs style="left:724px;top:130px;font-size:14.5px;line-height:18px;color:#1a1a1a">File</div>
<div class=abs style="left:770px;top:130px;font-size:14.5px;line-height:18px;color:#1a1a1a">Edit</div>
<div class=abs style="left:709px;top:158px;width:87px;height:25px;background:#f0f0f0;border:1px solid #e2e2e2;border-bottom:none"></div><div class=abs style="left:715px;top:162px;font-size:13.6px;line-height:18px;color:#141414;white-space:pre;letter-spacing:-0.35px">Audio Config</div>
<div class=abs style="left:943px;top:158px;width:108px;height:25px;background:#f0f0f0;border:1px solid #e2e2e2;border-bottom:none"></div><div class=abs style="left:951px;top:162px;font-size:13.6px;line-height:18px;color:#141414;white-space:pre;letter-spacing:-0.35px">Router Sources</div>
<div class=abs style="left:1050px;top:158px;width:130px;height:25px;background:#f0f0f0;border:1px solid #e2e2e2;border-bottom:none"></div><div class=abs style="left:1059px;top:162px;font-size:13.6px;line-height:18px;color:#141414;white-space:pre;letter-spacing:-0.35px">Router Destinations</div>
<div class=abs style="left:889px;top:158px;width:55px;height:25px;background:#f0f0f0;border:1px solid #e2e2e2;border-bottom:none"></div><div class=abs style="left:895px;top:162px;font-size:13.6px;line-height:18px;color:#141414;white-space:pre;letter-spacing:-0.35px">Effects</div>
<div class=abs style="left:795px;top:155px;width:95px;height:28px;background:#fafafa;border:1px solid #e2e2e2;border-bottom:none"></div><div class=abs style="left:805px;top:160px;font-size:13.6px;line-height:18px;color:#141414;white-space:pre;letter-spacing:-0.35px">Video Config</div>
<div class=abs style="left:705px;top:180.5px;width:600px;height:736px;background:#f9f9f9"></div>
<div class=abs style="left:711px;top:184px;width:600px;height:728px;background:#fff"></div>
<svg class=abs style="left:0;top:0" width="1290" height="920" viewBox="0 0 1290 920"><path d="M1300 912.2H710.75V183.2H1300" fill="none" stroke="#1a1a1a" stroke-width="1.6"/></svg>
<div class=abs style="left:712px;top:225px;width:600px;height:1px;background:#a0a0a0"></div>
<div class=abs style="left:788px;top:184px;width:1px;height:41px;background:#e3e3e3"></div>
<div class=abs style="left:913px;top:184px;width:1px;height:41px;background:#e3e3e3"></div>
<div class=abs style="left:1038px;top:184px;width:1px;height:41px;background:#e3e3e3"></div>
<div class=abs style="left:1225px;top:184px;width:1px;height:41px;background:#e3e3e3"></div>
<div class=abs style="left:787.8px;top:184px;width:1.2px;height:702px;background:#a4a4a4"></div>
<div class=abs style="left:797px;top:197px;font-size:13.6px;line-height:18px;color:#111;white-space:pre;letter-spacing:-0.45px">X-point name</div>
<div class=abs style="left:923px;top:197px;font-size:13.6px;line-height:18px;color:#111;white-space:pre;letter-spacing:-0.45px">Physical input</div>
<div class=abs style="left:1047px;top:197px;font-size:13.6px;line-height:18px;color:#111;white-space:pre;letter-spacing:-0.45px">Input type</div>
<div class=abs style="left:1234px;top:197px;font-size:13.6px;line-height:18px;color:#111;white-space:pre;letter-spacing:-0.45px">Audiolink</div>
<svg class=abs style="left:0;top:0" width="1290" height="920" viewBox="0 0 1290 920">
<rect x="1040" y="226.30" width="185" height="25.92" fill="#fbfbfb"/>
<rect x="1227" y="226.30" width="70" height="25.92" fill="#fbfbfb"/>
<rect x="712" y="252.44" width="76" height="1.2" fill="#e4e4e4"/>
<rect x="789" y="252.19" width="250" height="1.7" fill="#b6b6b6"/>
<rect x="1039" y="251.74" width="260" height="2.6" fill="#aeaeae"/>
<rect x="1204.2" y="226.50" width="1" height="24.52" fill="#e2e2e2"/>
<path d="M1209.2 237.50L1213.9 242.10L1218.6 237.50" fill="none" stroke="#606060" stroke-width="1.15"/>
<rect x="1040" y="253.82" width="185" height="25.92" fill="#fbfbfb"/>
<rect x="1227" y="253.82" width="70" height="25.92" fill="#fbfbfb"/>
<rect x="712" y="279.96" width="76" height="1.2" fill="#e4e4e4"/>
<rect x="789" y="279.71" width="250" height="1.7" fill="#b6b6b6"/>
<rect x="1039" y="279.26" width="260" height="2.6" fill="#aeaeae"/>
<rect x="1204.2" y="254.02" width="1" height="24.52" fill="#e2e2e2"/>
<path d="M1209.2 265.02L1213.9 269.62L1218.6 265.02" fill="none" stroke="#606060" stroke-width="1.15"/>
<rect x="1040" y="281.34" width="185" height="25.92" fill="#fbfbfb"/>
<rect x="1227" y="281.34" width="70" height="25.92" fill="#fbfbfb"/>
<rect x="712" y="307.48" width="76" height="1.2" fill="#e4e4e4"/>
<rect x="789" y="307.23" width="250" height="1.7" fill="#b6b6b6"/>
<rect x="1039" y="306.78" width="260" height="2.6" fill="#aeaeae"/>
<rect x="1204.2" y="281.54" width="1" height="24.52" fill="#e2e2e2"/>
<path d="M1209.2 292.54L1213.9 297.14L1218.6 292.54" fill="none" stroke="#606060" stroke-width="1.15"/>
<rect x="1040" y="308.86" width="185" height="25.92" fill="#fbfbfb"/>
<rect x="1227" y="308.86" width="70" height="25.92" fill="#fbfbfb"/>
<rect x="712" y="335.00" width="76" height="1.2" fill="#e4e4e4"/>
<rect x="789" y="334.75" width="250" height="1.7" fill="#b6b6b6"/>
<rect x="1039" y="334.30" width="260" height="2.6" fill="#aeaeae"/>
<rect x="1204.2" y="309.06" width="1" height="24.52" fill="#e2e2e2"/>
<path d="M1209.2 320.06L1213.9 324.66L1218.6 320.06" fill="none" stroke="#606060" stroke-width="1.15"/>
<rect x="1040" y="336.38" width="185" height="25.92" fill="#fbfbfb"/>
<rect x="1227" y="336.38" width="70" height="25.92" fill="#fbfbfb"/>
<rect x="712" y="362.52" width="76" height="1.2" fill="#e4e4e4"/>
<rect x="789" y="362.27" width="250" height="1.7" fill="#b6b6b6"/>
<rect x="1039" y="361.82" width="260" height="2.6" fill="#aeaeae"/>
<rect x="1204.2" y="336.58" width="1" height="24.52" fill="#e2e2e2"/>
<path d="M1209.2 347.58L1213.9 352.18L1218.6 347.58" fill="none" stroke="#606060" stroke-width="1.15"/>
<rect x="1040" y="363.90" width="185" height="25.92" fill="#fbfbfb"/>
<rect x="1227" y="363.90" width="70" height="25.92" fill="#fbfbfb"/>
<rect x="712" y="390.04" width="76" height="1.2" fill="#e4e4e4"/>
<rect x="789" y="389.79" width="250" height="1.7" fill="#b6b6b6"/>
<rect x="1039" y="389.34" width="260" height="2.6" fill="#aeaeae"/>
<rect x="1204.2" y="364.10" width="1" height="24.52" fill="#e2e2e2"/>
<path d="M1209.2 375.10L1213.9 379.70L1218.6 375.10" fill="none" stroke="#606060" stroke-width="1.15"/>
<rect x="1040" y="391.42" width="185" height="25.92" fill="#fbfbfb"/>
<rect x="1227" y="391.42" width="70" height="25.92" fill="#fbfbfb"/>
<rect x="712" y="417.56" width="76" height="1.2" fill="#e4e4e4"/>
<rect x="789" y="417.31" width="250" height="1.7" fill="#b6b6b6"/>
<rect x="1039" y="416.86" width="260" height="2.6" fill="#aeaeae"/>
<rect x="1204.2" y="391.62" width="1" height="24.52" fill="#e2e2e2"/>
<path d="M1209.2 402.62L1213.9 407.22L1218.6 402.62" fill="none" stroke="#606060" stroke-width="1.15"/>
<rect x="1040" y="418.94" width="185" height="25.92" fill="#fbfbfb"/>
<rect x="1227" y="418.94" width="70" height="25.92" fill="#fbfbfb"/>
<rect x="712" y="445.08" width="76" height="1.2" fill="#e4e4e4"/>
<rect x="789" y="444.83" width="250" height="1.7" fill="#b6b6b6"/>
<rect x="1039" y="444.38" width="260" height="2.6" fill="#aeaeae"/>
<rect x="1204.2" y="419.14" width="1" height="24.52" fill="#e2e2e2"/>
<path d="M1209.2 430.14L1213.9 434.74L1218.6 430.14" fill="none" stroke="#606060" stroke-width="1.15"/>
<rect x="1040" y="446.46" width="185" height="25.92" fill="#fbfbfb"/>
<rect x="1227" y="446.46" width="70" height="25.92" fill="#fbfbfb"/>
<rect x="712" y="472.60" width="76" height="1.2" fill="#e4e4e4"/>
<rect x="789" y="472.35" width="250" height="1.7" fill="#b6b6b6"/>
<rect x="1039" y="471.90" width="260" height="2.6" fill="#aeaeae"/>
<rect x="1204.2" y="446.66" width="1" height="24.52" fill="#e2e2e2"/>
<path d="M1209.2 457.66L1213.9 462.26L1218.6 457.66" fill="none" stroke="#606060" stroke-width="1.15"/>
<rect x="1040" y="473.98" width="185" height="25.92" fill="#fbfbfb"/>
<rect x="1227" y="473.98" width="70" height="25.92" fill="#fbfbfb"/>
<rect x="712" y="500.12" width="76" height="1.2" fill="#e4e4e4"/>
<rect x="789" y="499.87" width="250" height="1.7" fill="#b6b6b6"/>
<rect x="1039" y="499.42" width="260" height="2.6" fill="#aeaeae"/>
<rect x="1204.2" y="474.18" width="1" height="24.52" fill="#e2e2e2"/>
<path d="M1209.2 485.18L1213.9 489.78L1218.6 485.18" fill="none" stroke="#606060" stroke-width="1.15"/>
<rect x="1040" y="501.50" width="185" height="25.92" fill="#fbfbfb"/>
<rect x="1227" y="501.50" width="70" height="25.92" fill="#fbfbfb"/>
<rect x="712" y="527.64" width="76" height="1.2" fill="#e4e4e4"/>
<rect x="789" y="527.39" width="250" height="1.7" fill="#b6b6b6"/>
<rect x="1039" y="526.94" width="260" height="2.6" fill="#aeaeae"/>
<rect x="1204.2" y="501.70" width="1" height="24.52" fill="#e2e2e2"/>
<path d="M1209.2 512.70L1213.9 517.30L1218.6 512.70" fill="none" stroke="#606060" stroke-width="1.15"/>
<rect x="1040" y="529.02" width="185" height="25.92" fill="#fbfbfb"/>
<rect x="1227" y="529.02" width="70" height="25.92" fill="#fbfbfb"/>
<rect x="712" y="555.16" width="76" height="1.2" fill="#e4e4e4"/>
<rect x="789" y="554.91" width="250" height="1.7" fill="#b6b6b6"/>
<rect x="1039" y="554.46" width="260" height="2.6" fill="#aeaeae"/>
<rect x="1204.2" y="529.22" width="1" height="24.52" fill="#e2e2e2"/>
<path d="M1209.2 540.22L1213.9 544.82L1218.6 540.22" fill="none" stroke="#606060" stroke-width="1.15"/>
<rect x="1040" y="556.54" width="185" height="25.92" fill="#fbfbfb"/>
<rect x="1227" y="556.54" width="70" height="25.92" fill="#fbfbfb"/>
<rect x="712" y="582.68" width="76" height="1.2" fill="#e4e4e4"/>
<rect x="789" y="582.43" width="250" height="1.7" fill="#b6b6b6"/>
<rect x="1039" y="581.98" width="260" height="2.6" fill="#aeaeae"/>
<rect x="1204.2" y="556.74" width="1" height="24.52" fill="#e2e2e2"/>
<path d="M1209.2 567.74L1213.9 572.34L1218.6 567.74" fill="none" stroke="#606060" stroke-width="1.15"/>
<rect x="1040" y="584.06" width="185" height="25.92" fill="#fbfbfb"/>
<rect x="1227" y="584.06" width="70" height="25.92" fill="#fbfbfb"/>
<rect x="712" y="610.20" width="76" height="1.2" fill="#e4e4e4"/>
<rect x="789" y="609.95" width="250" height="1.7" fill="#b6b6b6"/>
<rect x="1039" y="609.50" width="260" height="2.6" fill="#aeaeae"/>
<rect x="1204.2" y="584.26" width="1" height="24.52" fill="#e2e2e2"/>
<path d="M1209.2 595.26L1213.9 599.86L1218.6 595.26" fill="none" stroke="#606060" stroke-width="1.15"/>
<rect x="1040" y="611.58" width="185" height="25.92" fill="#fbfbfb"/>
<rect x="1227" y="611.58" width="70" height="25.92" fill="#fbfbfb"/>
<rect x="712" y="637.72" width="76" height="1.2" fill="#e4e4e4"/>
<rect x="789" y="637.47" width="250" height="1.7" fill="#b6b6b6"/>
<rect x="1039" y="637.02" width="260" height="2.6" fill="#aeaeae"/>
<rect x="1204.2" y="611.78" width="1" height="24.52" fill="#e2e2e2"/>
<path d="M1209.2 622.78L1213.9 627.38L1218.6 622.78" fill="none" stroke="#606060" stroke-width="1.15"/>
<rect x="1040" y="639.10" width="185" height="25.92" fill="#fbfbfb"/>
<rect x="1227" y="639.10" width="70" height="25.92" fill="#fbfbfb"/>
<rect x="712" y="665.24" width="76" height="1.2" fill="#e4e4e4"/>
<rect x="789" y="664.99" width="250" height="1.7" fill="#b6b6b6"/>
<rect x="1039" y="664.54" width="260" height="2.6" fill="#aeaeae"/>
<rect x="1204.2" y="639.30" width="1" height="24.52" fill="#e2e2e2"/>
<path d="M1209.2 650.30L1213.9 654.90L1218.6 650.30" fill="none" stroke="#606060" stroke-width="1.15"/>
<rect x="1040" y="666.62" width="185" height="25.92" fill="#fbfbfb"/>
<rect x="1227" y="666.62" width="70" height="25.92" fill="#fbfbfb"/>
<rect x="712" y="692.76" width="76" height="1.2" fill="#e4e4e4"/>
<rect x="789" y="692.51" width="250" height="1.7" fill="#b6b6b6"/>
<rect x="1039" y="692.06" width="260" height="2.6" fill="#aeaeae"/>
<rect x="1204.2" y="666.82" width="1" height="24.52" fill="#e2e2e2"/>
<path d="M1209.2 677.82L1213.9 682.42L1218.6 677.82" fill="none" stroke="#606060" stroke-width="1.15"/>
<rect x="1040" y="694.14" width="185" height="25.92" fill="#fbfbfb"/>
<rect x="1227" y="694.14" width="70" height="25.92" fill="#fbfbfb"/>
<rect x="712" y="720.28" width="76" height="1.2" fill="#e4e4e4"/>
<rect x="789" y="720.03" width="250" height="1.7" fill="#b6b6b6"/>
<rect x="1039" y="719.58" width="260" height="2.6" fill="#aeaeae"/>
<rect x="1204.2" y="694.34" width="1" height="24.52" fill="#e2e2e2"/>
<path d="M1209.2 705.34L1213.9 709.94L1218.6 705.34" fill="none" stroke="#606060" stroke-width="1.15"/>
<rect x="1040" y="721.66" width="185" height="25.92" fill="#fbfbfb"/>
<rect x="1227" y="721.66" width="70" height="25.92" fill="#fbfbfb"/>
<rect x="712" y="747.80" width="76" height="1.2" fill="#e4e4e4"/>
<rect x="789" y="747.55" width="250" height="1.7" fill="#b6b6b6"/>
<rect x="1039" y="747.10" width="260" height="2.6" fill="#aeaeae"/>
<rect x="1204.2" y="721.86" width="1" height="24.52" fill="#e2e2e2"/>
<path d="M1209.2 732.86L1213.9 737.46L1218.6 732.86" fill="none" stroke="#606060" stroke-width="1.15"/>
<rect x="1040" y="749.18" width="185" height="25.92" fill="#fbfbfb"/>
<rect x="1227" y="749.18" width="70" height="25.92" fill="#fbfbfb"/>
<rect x="712" y="775.32" width="76" height="1.2" fill="#e4e4e4"/>
<rect x="789" y="775.07" width="250" height="1.7" fill="#b6b6b6"/>
<rect x="1039" y="774.62" width="260" height="2.6" fill="#aeaeae"/>
<rect x="1204.2" y="749.38" width="1" height="24.52" fill="#e2e2e2"/>
<path d="M1209.2 760.38L1213.9 764.98L1218.6 760.38" fill="none" stroke="#606060" stroke-width="1.15"/>
<rect x="1040" y="776.70" width="185" height="25.92" fill="#fbfbfb"/>
<rect x="1227" y="776.70" width="70" height="25.92" fill="#fbfbfb"/>
<rect x="712" y="802.84" width="76" height="1.2" fill="#e4e4e4"/>
<rect x="789" y="802.59" width="250" height="1.7" fill="#b6b6b6"/>
<rect x="1039" y="802.14" width="260" height="2.6" fill="#aeaeae"/>
<rect x="1204.2" y="776.90" width="1" height="24.52" fill="#e2e2e2"/>
<path d="M1209.2 787.90L1213.9 792.50L1218.6 787.90" fill="none" stroke="#606060" stroke-width="1.15"/>
<rect x="1040" y="804.22" width="185" height="25.92" fill="#fbfbfb"/>
<rect x="1227" y="804.22" width="70" height="25.92" fill="#fbfbfb"/>
<rect x="712" y="830.36" width="76" height="1.2" fill="#e4e4e4"/>
<rect x="789" y="830.11" width="250" height="1.7" fill="#b6b6b6"/>
<rect x="1039" y="829.66" width="260" height="2.6" fill="#aeaeae"/>
<rect x="1204.2" y="804.42" width="1" height="24.52" fill="#e2e2e2"/>
<path d="M1209.2 815.42L1213.9 820.02L1218.6 815.42" fill="none" stroke="#606060" stroke-width="1.15"/>
<rect x="1040" y="831.74" width="185" height="25.92" fill="#fbfbfb"/>
<rect x="1227" y="831.74" width="70" height="25.92" fill="#fbfbfb"/>
<rect x="712" y="857.88" width="76" height="1.2" fill="#e4e4e4"/>
<rect x="789" y="857.63" width="250" height="1.7" fill="#b6b6b6"/>
<rect x="1039" y="857.18" width="260" height="2.6" fill="#aeaeae"/>
<path d="M1209.2 842.94L1213.9 847.54L1218.6 842.94" fill="none" stroke="#606060" stroke-width="1.15"/>
<rect x="1040" y="859.26" width="185" height="25.92" fill="#fbfbfb"/>
<rect x="1227" y="859.26" width="70" height="25.92" fill="#fbfbfb"/>
<rect x="712" y="885.40" width="76" height="1.2" fill="#e4e4e4"/>
<rect x="789" y="885.15" width="250" height="1.7" fill="#b6b6b6"/>
<rect x="1039" y="884.70" width="260" height="2.6" fill="#aeaeae"/>
<rect x="1204.2" y="859.46" width="1" height="24.52" fill="#e2e2e2"/>
<path d="M1209.2 870.46L1213.9 875.06L1218.6 870.46" fill="none" stroke="#606060" stroke-width="1.15"/>
<rect x="912.8" y="225.5" width="1.5" height="661" fill="#b0b0b0"/>
<rect x="1037.6" y="225.5" width="1.7" height="661" fill="#acacac"/>
<rect x="1224.8" y="225.5" width="2.2" height="661" fill="#acacac"/>
</svg>
<div class=abs style="left:738px;top:231.00px;width:43px;text-align:right;font-size:13.8px;line-height:18px;color:#6a6a6a;letter-spacing:-0.6px">41</div>
<div class=abs style="left:792px;top:230.80px;font-size:15.2px;line-height:18px;color:#111;white-space:pre;letter-spacing:-0.75px">INPUT 41</div>
<div class=abs style="left:917px;top:230.80px;font-size:15.2px;line-height:18px;color:#111;white-space:pre;letter-spacing:-0.6px">40</div>
<div class=abs style="left:1042px;top:230.80px;font-size:14.4px;line-height:18px;color:#111;white-space:pre;letter-spacing:-0.45px">N/A</div>
<div class=abs style="left:738px;top:258.52px;width:43px;text-align:right;font-size:13.8px;line-height:18px;color:#6a6a6a;letter-spacing:-0.6px">42</div>
<div class=abs style="left:792px;top:258.32px;font-size:15.2px;line-height:18px;color:#111;white-space:pre;letter-spacing:-0.75px">INPUT 42</div>
<div class=abs style="left:917px;top:258.32px;font-size:15.2px;line-height:18px;color:#111;white-space:pre;letter-spacing:-0.6px">41</div>
<div class=abs style="left:1042px;top:258.32px;font-size:14.4px;line-height:18px;color:#111;white-space:pre;letter-spacing:-0.45px">N/A</div>
<div class=abs style="left:738px;top:286.04px;width:43px;text-align:right;font-size:13.8px;line-height:18px;color:#6a6a6a;letter-spacing:-0.6px">43</div>
<div class=abs style="left:792px;top:285.84px;font-size:15.2px;line-height:18px;color:#111;white-space:pre;letter-spacing:-0.75px">INPUT 43</div>
<div class=abs style="left:917px;top:285.84px;font-size:15.2px;line-height:18px;color:#111;white-space:pre;letter-spacing:-0.6px">42</div>
<div class=abs style="left:1042px;top:285.84px;font-size:14.4px;line-height:18px;color:#111;white-space:pre;letter-spacing:-0.45px">N/A</div>
<div class=abs style="left:738px;top:313.56px;width:43px;text-align:right;font-size:13.8px;line-height:18px;color:#6a6a6a;letter-spacing:-0.6px">44</div>
<div class=abs style="left:792px;top:313.36px;font-size:15.2px;line-height:18px;color:#111;white-space:pre;letter-spacing:-0.75px">INPUT 44</div>
<div class=abs style="left:917px;top:313.36px;font-size:15.2px;line-height:18px;color:#111;white-space:pre;letter-spacing:-0.6px">43</div>
<div class=abs style="left:1042px;top:313.36px;font-size:14.4px;line-height:18px;color:#111;white-space:pre;letter-spacing:-0.45px">N/A</div>
<div class=abs style="left:738px;top:341.08px;width:43px;text-align:right;font-size:13.8px;line-height:18px;color:#6a6a6a;letter-spacing:-0.6px">45</div>
<div class=abs style="left:792px;top:340.88px;font-size:15.2px;line-height:18px;color:#111;white-space:pre;letter-spacing:-0.75px">Buffer1</div>
<div class=abs style="left:917px;top:340.88px;font-size:15.2px;line-height:18px;color:#111;white-space:pre;letter-spacing:-0.6px">44</div>
<div class=abs style="left:1042px;top:340.88px;font-size:14.4px;line-height:18px;color:#111;white-space:pre;letter-spacing:-0.45px">N/A</div>
<div class=abs style="left:738px;top:368.60px;width:43px;text-align:right;font-size:13.8px;line-height:18px;color:#6a6a6a;letter-spacing:-0.6px">46</div>
<div class=abs style="left:792px;top:368.40px;font-size:15.2px;line-height:18px;color:#111;white-space:pre;letter-spacing:-0.75px">Buffer2</div>
<div class=abs style="left:917px;top:368.40px;font-size:15.2px;line-height:18px;color:#111;white-space:pre;letter-spacing:-0.6px">45</div>
<div class=abs style="left:1042px;top:368.40px;font-size:14.4px;line-height:18px;color:#111;white-space:pre;letter-spacing:-0.45px">N/A</div>
<div class=abs style="left:738px;top:396.12px;width:43px;text-align:right;font-size:13.8px;line-height:18px;color:#6a6a6a;letter-spacing:-0.6px">47</div>
<div class=abs style="left:792px;top:395.92px;font-size:15.2px;line-height:18px;color:#111;white-space:pre;letter-spacing:-0.75px">Buffer3</div>
<div class=abs style="left:917px;top:395.92px;font-size:15.2px;line-height:18px;color:#111;white-space:pre;letter-spacing:-0.6px">46</div>
<div class=abs style="left:1042px;top:395.92px;font-size:14.4px;line-height:18px;color:#111;white-space:pre;letter-spacing:-0.45px">N/A</div>
<div class=abs style="left:738px;top:423.64px;width:43px;text-align:right;font-size:13.8px;line-height:18px;color:#6a6a6a;letter-spacing:-0.6px">48</div>
<div class=abs style="left:792px;top:423.44px;font-size:15.2px;line-height:18px;color:#111;white-space:pre;letter-spacing:-0.75px">Buffer4</div>
<div class=abs style="left:917px;top:423.44px;font-size:15.2px;line-height:18px;color:#111;white-space:pre;letter-spacing:-0.6px">47</div>
<div class=abs style="left:1042px;top:423.44px;font-size:14.4px;line-height:18px;color:#111;white-space:pre;letter-spacing:-0.45px">N/A</div>
<div class=abs style="left:738px;top:451.16px;width:43px;text-align:right;font-size:13.8px;line-height:18px;color:#6a6a6a;letter-spacing:-0.6px">49</div>
<div class=abs style="left:792px;top:450.96px;font-size:15.2px;line-height:18px;color:#111;white-space:pre;letter-spacing:-0.75px">Buffer5</div>
<div class=abs style="left:917px;top:450.96px;font-size:15.2px;line-height:18px;color:#111;white-space:pre;letter-spacing:-0.6px">48</div>
<div class=abs style="left:1042px;top:450.96px;font-size:14.4px;line-height:18px;color:#111;white-space:pre;letter-spacing:-0.45px">N/A</div>
<div class=abs style="left:738px;top:478.68px;width:43px;text-align:right;font-size:13.8px;line-height:18px;color:#6a6a6a;letter-spacing:-0.6px">50</div>
<div class=abs style="left:792px;top:478.48px;font-size:15.2px;line-height:18px;color:#111;white-space:pre;letter-spacing:-0.75px">Buffer6</div>
<div class=abs style="left:917px;top:478.48px;font-size:15.2px;line-height:18px;color:#111;white-space:pre;letter-spacing:-0.6px">49</div>
<div class=abs style="left:1042px;top:478.48px;font-size:14.4px;line-height:18px;color:#111;white-space:pre;letter-spacing:-0.45px">N/A</div>
<div class=abs style="left:738px;top:506.20px;width:43px;text-align:right;font-size:13.8px;line-height:18px;color:#6a6a6a;letter-spacing:-0.6px">51</div>
<div class=abs style="left:792px;top:506.00px;font-size:15.2px;line-height:18px;color:#111;white-space:pre;letter-spacing:-0.75px">Buffer7</div>
<div class=abs style="left:917px;top:506.00px;font-size:15.2px;line-height:18px;color:#111;white-space:pre;letter-spacing:-0.6px">50</div>
<div class=abs style="left:1042px;top:506.00px;font-size:14.4px;line-height:18px;color:#111;white-space:pre;letter-spacing:-0.45px">N/A</div>
<div class=abs style="left:738px;top:533.72px;width:43px;text-align:right;font-size:13.8px;line-height:18px;color:#6a6a6a;letter-spacing:-0.6px">52</div>
<div class=abs style="left:792px;top:533.52px;font-size:15.2px;line-height:18px;color:#111;white-space:pre;letter-spacing:-0.75px">Buffer8</div>
<div class=abs style="left:917px;top:533.52px;font-size:15.2px;line-height:18px;color:#111;white-space:pre;letter-spacing:-0.6px">51</div>
<div class=abs style="left:1042px;top:533.52px;font-size:14.4px;line-height:18px;color:#111;white-space:pre;letter-spacing:-0.45px">N/A</div>
<div class=abs style="left:738px;top:561.24px;width:43px;text-align:right;font-size:13.8px;line-height:18px;color:#6a6a6a;letter-spacing:-0.6px">53</div>
<div class=abs style="left:792px;top:561.04px;font-size:15.2px;line-height:18px;color:#111;white-space:pre;letter-spacing:-0.75px">Buffer9</div>
<div class=abs style="left:917px;top:561.04px;font-size:15.2px;line-height:18px;color:#111;white-space:pre;letter-spacing:-0.6px">52</div>
<div class=abs style="left:1042px;top:561.04px;font-size:14.4px;line-height:18px;color:#111;white-space:pre;letter-spacing:-0.45px">N/A</div>
<div class=abs style="left:738px;top:588.76px;width:43px;text-align:right;font-size:13.8px;line-height:18px;color:#6a6a6a;letter-spacing:-0.6px">54</div>
<div class=abs style="left:792px;top:588.56px;font-size:15.2px;line-height:18px;color:#111;white-space:pre;letter-spacing:-0.75px">Buffer10</div>
<div class=abs style="left:917px;top:588.56px;font-size:15.2px;line-height:18px;color:#111;white-space:pre;letter-spacing:-0.6px">53</div>
<div class=abs style="left:1042px;top:588.56px;font-size:14.4px;line-height:18px;color:#111;white-space:pre;letter-spacing:-0.45px">N/A</div>
<div class=abs style="left:738px;top:616.28px;width:43px;text-align:right;font-size:13.8px;line-height:18px;color:#6a6a6a;letter-spacing:-0.6px">55</div>
<div class=abs style="left:792px;top:616.08px;font-size:15.2px;line-height:18px;color:#111;white-space:pre;letter-spacing:-0.75px">Buffer11</div>
<div class=abs style="left:917px;top:616.08px;font-size:15.2px;line-height:18px;color:#111;white-space:pre;letter-spacing:-0.6px">54</div>
<div class=abs style="left:1042px;top:616.08px;font-size:14.4px;line-height:18px;color:#111;white-space:pre;letter-spacing:-0.45px">N/A</div>
<div class=abs style="left:738px;top:643.80px;width:43px;text-align:right;font-size:13.8px;line-height:18px;color:#6a6a6a;letter-spacing:-0.6px">56</div>
<div class=abs style="left:792px;top:643.60px;font-size:15.2px;line-height:18px;color:#111;white-space:pre;letter-spacing:-0.75px">Buffer12</div>
<div class=abs style="left:917px;top:643.60px;font-size:15.2px;line-height:18px;color:#111;white-space:pre;letter-spacing:-0.6px">55</div>
<div class=abs style="left:1042px;top:643.60px;font-size:14.4px;line-height:18px;color:#111;white-space:pre;letter-spacing:-0.45px">N/A</div>
<div class=abs style="left:738px;top:671.32px;width:43px;text-align:right;font-size:13.8px;line-height:18px;color:#6a6a6a;letter-spacing:-0.6px">57</div>
<div class=abs style="left:792px;top:671.12px;font-size:15.2px;line-height:18px;color:#111;white-space:pre;letter-spacing:-0.75px">Buffer13</div>
<div class=abs style="left:917px;top:671.12px;font-size:15.2px;line-height:18px;color:#111;white-space:pre;letter-spacing:-0.6px">56</div>
<div class=abs style="left:1042px;top:671.12px;font-size:14.4px;line-height:18px;color:#111;white-space:pre;letter-spacing:-0.45px">N/A</div>
<div class=abs style="left:738px;top:698.84px;width:43px;text-align:right;font-size:13.8px;line-height:18px;color:#6a6a6a;letter-spacing:-0.6px">58</div>
<div class=abs style="left:792px;top:698.64px;font-size:15.2px;line-height:18px;color:#111;white-space:pre;letter-spacing:-0.75px">Buffer14</div>
<div class=abs style="left:917px;top:698.64px;font-size:15.2px;line-height:18px;color:#111;white-space:pre;letter-spacing:-0.6px">57</div>
<div class=abs style="left:1042px;top:698.64px;font-size:14.4px;line-height:18px;color:#111;white-space:pre;letter-spacing:-0.45px">N/A</div>
<div class=abs style="left:738px;top:726.36px;width:43px;text-align:right;font-size:13.8px;line-height:18px;color:#6a6a6a;letter-spacing:-0.6px">59</div>
<div class=abs style="left:792px;top:726.16px;font-size:15.2px;line-height:18px;color:#111;white-space:pre;letter-spacing:-0.75px">Buffer15</div>
<div class=abs style="left:917px;top:726.16px;font-size:15.2px;line-height:18px;color:#111;white-space:pre;letter-spacing:-0.6px">58</div>
<div class=abs style="left:1042px;top:726.16px;font-size:14.4px;line-height:18px;color:#111;white-space:pre;letter-spacing:-0.45px">N/A</div>
<div class=abs style="left:738px;top:753.88px;width:43px;text-align:right;font-size:13.8px;line-height:18px;color:#6a6a6a;letter-spacing:-0.6px">60</div>
<div class=abs style="left:792px;top:753.68px;font-size:15.2px;line-height:18px;color:#111;white-space:pre;letter-spacing:-0.75px">DDR 1</div>
<div class=abs style="left:917px;top:753.68px;font-size:15.2px;line-height:18px;color:#111;white-space:pre;letter-spacing:-0.6px">67</div>
<div class=abs style="left:1042px;top:753.68px;font-size:14.4px;line-height:18px;color:#111;white-space:pre;letter-spacing:-0.45px">videoserver</div>
<div class=abs style="left:738px;top:781.40px;width:43px;text-align:right;font-size:13.8px;line-height:18px;color:#6a6a6a;letter-spacing:-0.6px">61</div>
<div class=abs style="left:792px;top:781.20px;font-size:15.2px;line-height:18px;color:#111;white-space:pre;letter-spacing:-0.75px">DDR 2</div>
<div class=abs style="left:917px;top:781.20px;font-size:15.2px;line-height:18px;color:#111;white-space:pre;letter-spacing:-0.6px">68</div>
<div class=abs style="left:1042px;top:781.20px;font-size:14.4px;line-height:18px;color:#111;white-space:pre;letter-spacing:-0.45px">videoserver</div>
<div class=abs style="left:738px;top:808.92px;width:43px;text-align:right;font-size:13.8px;line-height:18px;color:#6a6a6a;letter-spacing:-0.6px">62</div>
<div class=abs style="left:792px;top:808.72px;font-size:15.2px;line-height:18px;color:#111;white-space:pre;letter-spacing:-0.75px">DDR 3</div>
<div class=abs style="left:917px;top:808.72px;font-size:15.2px;line-height:18px;color:#111;white-space:pre;letter-spacing:-0.6px">69</div>
<div class=abs style="left:1042px;top:808.72px;font-size:14.4px;line-height:18px;color:#111;white-space:pre;letter-spacing:-0.45px">videoserver</div>
<div class=abs style="left:738px;top:836.44px;width:43px;text-align:right;font-size:13.8px;line-height:18px;color:#6a6a6a;letter-spacing:-0.6px">63</div>
<div class=abs style="left:792px;top:836.24px;font-size:15.2px;line-height:18px;color:#111;white-space:pre;letter-spacing:-0.75px">DDR 4</div>
<div class=abs style="left:917px;top:836.24px;font-size:15.2px;line-height:18px;color:#111;white-space:pre;letter-spacing:-0.6px">70</div>
<div class=abs style="left:1043px;top:836.24px;font-size:14.4px;line-height:18px;color:#111;white-space:pre;letter-spacing:-0.45px">videoserver</div>
<div class=abs style="left:738px;top:863.96px;width:43px;text-align:right;font-size:13.8px;line-height:18px;color:#6a6a6a;letter-spacing:-0.6px">64</div>
<svg class=abs style="left:0;top:0" width="1290" height="920" viewBox="0 0 1290 920"><rect x="719.6" y="849" width="1.4" height="1.4" fill="#333"/><rect x="722" y="849" width="1.4" height="1.4" fill="#333"/><path d="M724.6 850.6L725.6 847.6L731 842.2L733 844.2L727.6 849.6Z" fill="#3a3a3a"/><path d="M723.4 870.6L726.1 869.6L728.8 870.6L729.4 873.6L728.2 876.6L726.1 877.6L724 876.6L722.8 873.6Z" fill="#444"/></svg>
<div class=abs style="left:712px;top:886px;width:600px;height:4px;background:#acacac"></div>
<div class=abs style="left:712px;top:890px;width:600px;height:22px;background:#efefef"></div>
<div class=abs style="left:732px;top:900.5px;width:600px;height:2px;background:#8c8c8c"></div>
<svg class=abs style="left:0;top:0" width="1290" height="920" viewBox="0 0 1290 920">
<rect x="104.8" y="593.3" width="213.5" height="78" fill="none" stroke="#ff5500" stroke-width="3.6"/>
<rect x="771" y="749.8" width="398.5" height="122.5" fill="none" stroke="#ff5500" stroke-width="3.4"/>
<line x1="911" y1="761" x2="303" y2="609" stroke="#ff5500" stroke-width="3.6"/>
<path d="M291.5 606.4L311 601L307 619Z" fill="#ff5500"/>
</svg>
</body></html>
